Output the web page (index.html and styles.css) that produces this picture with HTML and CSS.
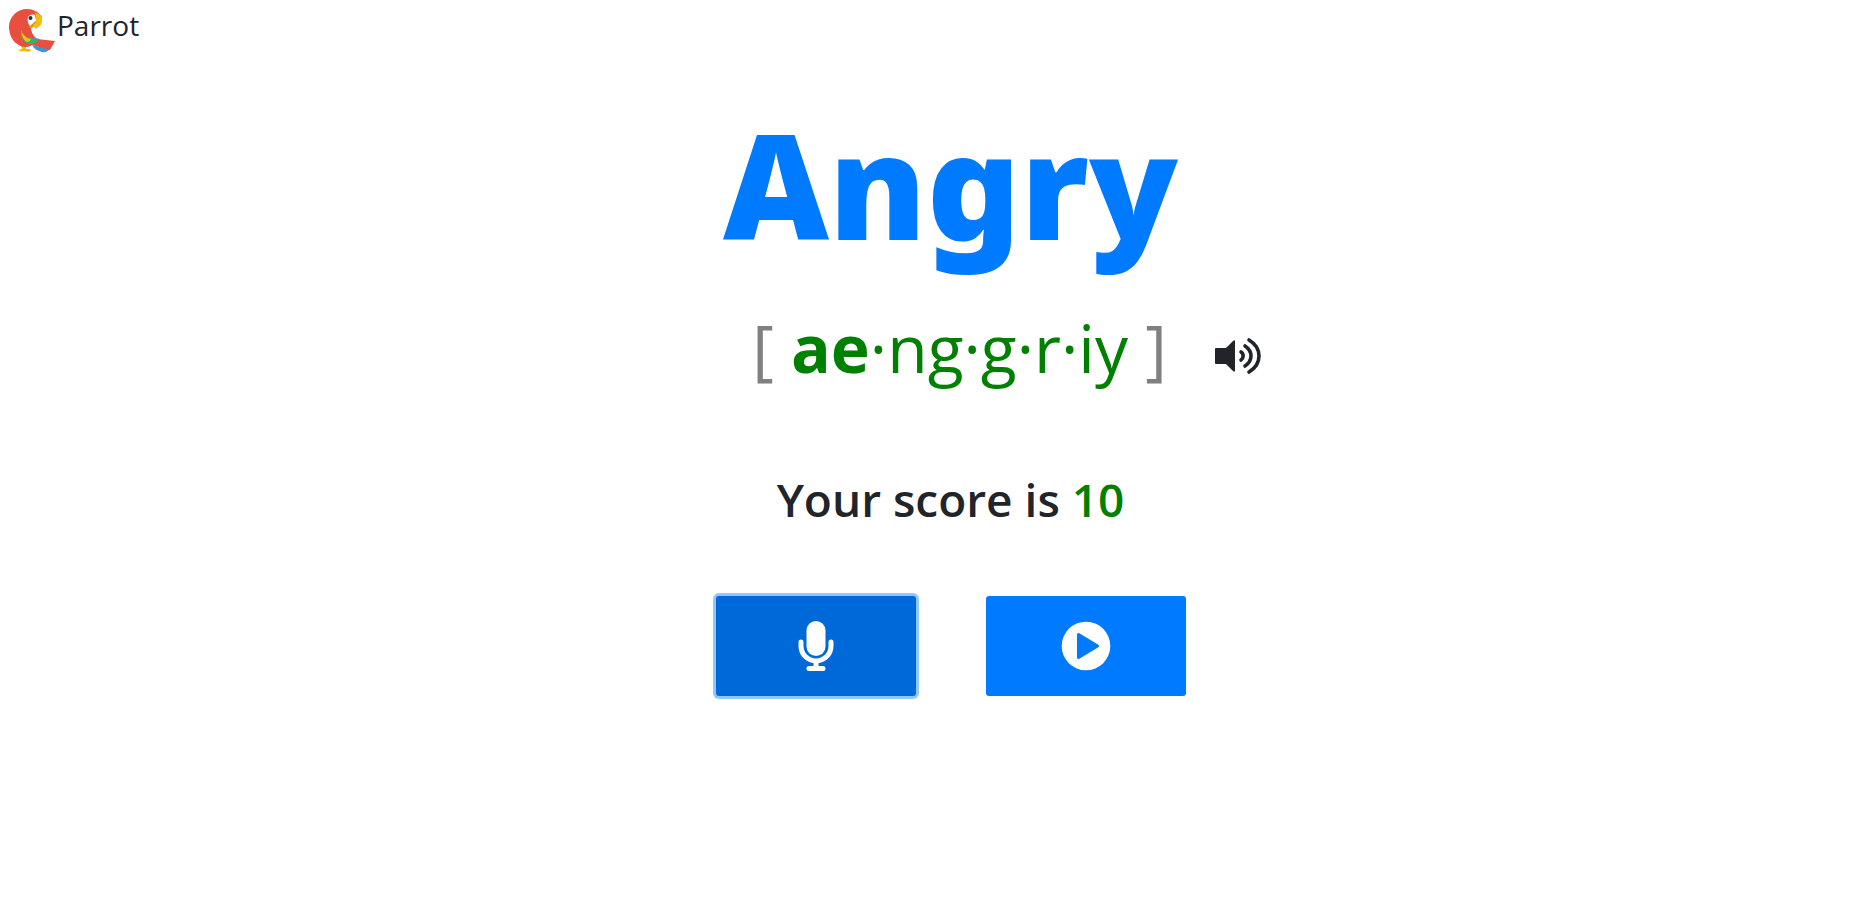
FILE: index.html
```html
<!DOCTYPE html>
<html lang="en">
<head>
<meta charset="utf-8">
<title>Parrot</title>
<link rel="stylesheet" href="styles.css">
</head>
<body>
<header class="brand">
  <svg class="brand-logo" viewBox="0 0 46 44" aria-hidden="true">
    <path fill="#f1b90c" d="M12 36h5v4h4l1 2c-3 1-5 1-7 0-2 1-4 0-6-1l4-1z"/>
    <path fill="#3a97d9" d="M23 36l18 4c-2 2-5 4-8 3-4-1-8-3-10-7z"/>
    <path fill="#e84f3f" d="M33 8C30 3 24 0 18 0 8 0 0 8 0 18c0 9 5 18 15 20 3 0 5 0 8-2l18 5 5-9-18-2c-4-3-6-7-6-12z"/>
    <path fill="#3a97d9" d="M20 35c5 0 8-2 11-5l-5-1-7 4z"/>
    <path fill="#2fb56a" d="M12 22c3 6 8 8 18 8-2 3-6 5-10 5-5-1-8-6-8-13z"/>
    <path fill="#f5bd10" d="M12 21c2 5 5 8 10 9-1 2-2 3-4 3-4-2-6-7-6-12z"/>
    <path fill="#fff" d="M19 8c1-2 4-3 7-2l1 6-6 5c-2-2-3-6-2-9z"/>
    <path fill="#f5bd10" d="M26 4c5 0 8 4 7 9-1 4-4 6-7 7 0-2-1-2-2-2 3-4 4-8 2-14z"/>
    <path fill="#dfa000" d="M18 18c3 0 6-2 7-6 1 3 0 6-2 7z"/>
    <circle cx="21.500" cy="9" r="2" fill="#153c36"/>
  </svg>
  <span class="brand-name">Parrot</span>
</header>
<main class="practice">
  <h1 class="word">Angry</h1>
  <div class="phonetic-row">
    <div class="phonetic"><span class="bracket">[</span> <b>ae</b>·ng·g·r·iy <span class="bracket">]</span></div>
    <button class="listen" type="button" aria-label="Listen">
      <svg class="listen-icon" viewBox="0 0 46 38" aria-hidden="true">
        <path fill="currentColor" d="M1 11h10l7-7q2-1.500 2 .5v29q0 2-2 .5L11 27H1q-1 0-1-1V12q0-1 1-1z"/>
        <path fill="none" stroke="currentColor" stroke-width="3.600" stroke-linecap="round" d="M26 15a4.800 4.800 0 0 1 0 8M30 9q6 4 6 10t-6 10M34 3q10 6 10 16t-10 16"/>
      </svg>
    </button>
  </div>
  <h2 class="score">Your score is <span class="score-value">10</span></h2>
  <div class="actions">
    <button class="action action-active" type="button" aria-label="Record">
      <svg class="action-icon" viewBox="0 0 50 50" aria-hidden="true">
        <rect x="15.500" y="0" width="19" height="35" rx="9.500" fill="#fff"/>
        <path fill="none" stroke="#fff" stroke-width="5" stroke-linecap="round" d="M10 21v4a15 15 0 0 0 30 0v-4M25 40v6M18 47.500h14"/>
      </svg>
    </button>
    <button class="action" type="button" aria-label="Play">
      <svg class="action-icon" viewBox="0 0 50 50" aria-hidden="true">
        <circle cx="25" cy="25" r="24.300" fill="#fff"/>
        <path fill="#007bff" stroke="#007bff" stroke-width="3" stroke-linejoin="round" d="M17.500 13.500v23L36.500 25z"/>
      </svg>
    </button>
  </div>
</main>
</body>
</html>
```
FILE: styles.css
```css
* {
  box-sizing: border-box;
}

body {
  margin: 0;
  background: #fff;
  color: #212529;
  font-family: "Segoe UI", "Open Sans", "Noto Sans", sans-serif;
}

.brand {
  display: flex;
  align-items: flex-start;
  gap: 2px;
  padding: 9px 9px 0;
}

.brand-logo {
  width: 46px;
  height: 44px;
}

.brand-name {
  font-size: 28px;
  line-height: 32px;
}

.practice {
  display: flex;
  flex-direction: column;
  align-items: center;
  padding: 41px 0 48px 46px;
}

.word {
  margin: 0;
  color: #007bff;
  font-family: "Segoe UI", "Noto Sans", sans-serif;
  font-size: 146px;
  font-weight: 900;
  line-height: 180px;
}

.phonetic-row {
  display: grid;
  grid-template-columns: 1fr auto 1fr;
  align-items: center;
  width: 100%;
  margin-top: 23px;
}

.phonetic {
  grid-column: 2;
  padding-left: 18px;
  color: green;
  font-size: 66px;
  line-height: 100px;
  white-space: nowrap;
}

.bracket {
  color: gray;
}

.listen {
  justify-self: start;
  margin: 18px 0 0 48px;
  padding: 0;
  border: 0;
  background: none;
  color: #212529;
}

.listen-icon {
  display: block;
  width: 46px;
  height: 38px;
}

.score {
  margin: 72px 0 0;
  font-size: 46px;
  font-weight: 600;
  line-height: 60px;
}

.score-value {
  color: green;
}

.actions {
  display: flex;
  gap: 70px;
  margin-top: 67px;
}

.action {
  display: grid;
  place-items: center;
  width: 200px;
  height: 100px;
  padding: 0;
  border: 0;
  border-radius: 3px;
  background: #007bff;
}

.action-active {
  background: #0069d9;
  box-shadow: 0 0 0 3px #94c6fe;
}

.action-icon {
  width: 50px;
  height: 50px;
}
```
